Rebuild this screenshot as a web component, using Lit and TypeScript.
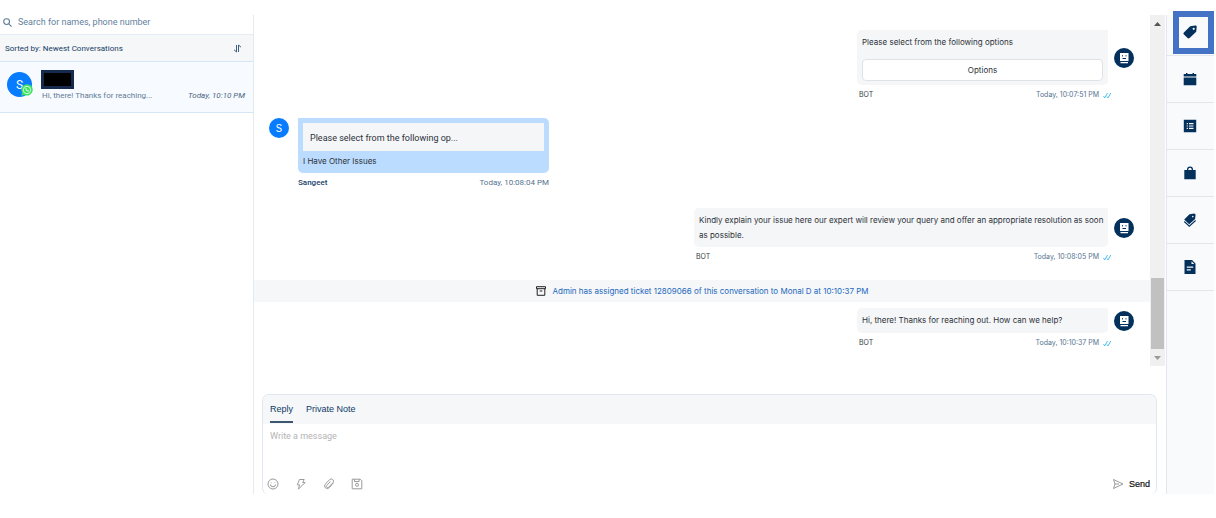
import { LitElement, html, css, svg, TemplateResult } from "lit";
import { customElement, property, state } from "lit/decorators.js";
import { classMap } from "lit/directives/class-map.js";

const icon = (box: string, body: TemplateResult, cls = "icon") =>
  html`<svg class=${cls} viewBox=${box} aria-hidden="true">${body}</svg>`;

const railIcons: { label: string; art: TemplateResult }[] = [
  {
    label: "Tags",
    art: svg`<path fill-rule="evenodd" d="M7.200 1.300 12.400.6c.8-.1 1.400.5 1.300 1.300L13.200 6.800 6.600 13c-.6.6-1.400.6-2 0L.9 9.400c-.6-.6-.6-1.400 0-2zM10.700 2.700a1.100 1.100 0 1 0 0 2.200 1.100 1.100 0 0 0 0-2.200z"/>`,
  },
  {
    label: "Calendar",
    art: svg`<path d="M.7 2h2.300V1h1.500v1h5V1H11v1h2.300v2.600H.7zM.7 5.600h12.600V13.200H.7z"/>`,
  },
  {
    label: "Details",
    art: svg`<path fill-rule="evenodd" d="M.8.8h12.400v12.400H.8zM3.700 4v1.200h1.200V4zm2.300 0v1.200h4.500V4zM3.700 6.400v1.200h1.200V6.400zm2.300 0v1.200h4.500V6.400zM3.700 8.800V10h1.200V8.800zm2.300 0V10h4.500V8.800z"/>`,
  },
  {
    label: "Orders",
    art: svg`<path fill-rule="evenodd" d="M1.300 4H4V3.500a3 3 0 0 1 6 0V4h2.700v9.200H1.300zM5.300 4h3.400v-.5a1.700 1.700 0 0 0-3.400 0z"/>`,
  },
  {
    label: "Tickets",
    art: svg`<path fill-rule="evenodd" d="M6.500 1.300 11.400.4l1.200 1-.5 4.600-5.900 5.200L1.200 6.500zM9.800 2.800a.8.8 0 1 0 0 1.600.8.8 0 0 0 0-1.600z"/><path d="M1.300 8.500l5 4.700 6.300-5.700" fill="none" stroke="currentColor" stroke-width="1.100"/>`,
  },
  {
    label: "Notes",
    art: svg`<path fill-rule="evenodd" d="M1.500 0H9l3.500 3.500V14h-11zM8.500 1.200V4h2.800zM3.800 6.600v1.200h6.400V6.600zm0 2.600v1.200h4V9.200z"/>`,
  },
];

const tools: { label: string; art: TemplateResult }[] = [
  {
    label: "Insert emoji",
    art: svg`<circle cx="6" cy="6" r="5"/><path d="M3.500 6.500a2.500 2.300 0 0 0 5 0M4.200 4v.6M7.800 4v.6"/>`,
  },
  {
    label: "Quick replies",
    art: svg`<path d="M4.500 1.500h4.700L7.700 4.500h2.500L3.500 11l1-4.200H2.300z"/>`,
  },
  {
    label: "Attach a file",
    art: svg`<path d="M10.300 5 6.200 9.700a2.600 2.600 0 0 1-3.900-3.500L6.500 1.700a2.300 2.300 0 0 1 3.400 3.100L5.700 9.200a1.300 1.300 0 0 1-2-1.700L7.500 3.500"/>`,
  },
  {
    label: "Save draft",
    art: svg`<path d="M1.200 1.200h8l1.600 1.600v8H1.200zM3.500 1.200v2.300h4.600V1.200"/><circle cx="6" cy="6.800" r="1.500"/>`,
  },
];

@customElement("bot-avatar")
class BotAvatar extends LitElement {
  static styles = css`
    :host { display: block; width: 20px; height: 20px; flex: none; }
    .face { display: block; width: 20px; height: 20px; }
  `;
  render() {
    return html`<svg class="face" viewBox="0 0 20 20" role="img" aria-label="Bot">
      <circle cx="10" cy="10" r="10" fill="#04315c" />
      <path d="M6 5h8.500v8H6zM6.500 14h7.500v1.200H6.500z" fill="#fff" />
      <path d="M8.500 7.200v1.200M12 7.200v1.200M8.500 10.500h3.500" stroke="#04315c" fill="none" />
    </svg>`;
  }
}

@customElement("bot-message")
class BotMessage extends LitElement {
  @property() text = "";
  @property() time = "";
  @property() option = "";
  @property({ type: Boolean, reflect: true }) wide = false;

  static styles = css`
    :host { display: block; align-self: flex-end; }
    .row { display: flex; align-items: center; gap: 6px; }
    .body { width: 251px; }
    :host([wide]) .body { width: 414px; padding-right: 2px; }
    .bubble {
      box-sizing: border-box;
      min-height: 25px;
      padding: 5px 5px 4px;
      background: #f5f6f8;
      border-radius: 5px 0 5px 5px;
      color: #2c3238;
    }
    .text { margin: 0; line-height: 15px; }
    .option {
      display: block;
      width: 100%;
      height: 22px;
      margin-top: 9px;
      padding: 0;
      border: 1px solid #dfe3e8;
      border-radius: 4px;
      background: #fff;
      color: #2c3238;
      font: inherit;
    }
    .meta {
      display: flex;
      align-items: center;
      justify-content: space-between;
      margin-top: 3px;
      padding: 0 22px 0 2px;
      font-size: 7px;
      line-height: 14px;
      color: #333a41;
    }
    .stamp { display: flex; align-items: center; gap: 4px; color: #54738f; }
    .ticks { width: 9px; height: 7px; fill: none; stroke: #4fc0ee; }
  `;
  render() {
    return html`
      <div class="row">
        <div class="body bubble">
          <p class="text">${this.text}</p>
          ${this.option ? html`<button class="option">${this.option}</button>` : ""}
        </div>
        <bot-avatar></bot-avatar>
      </div>
      <div class="meta">
        <span>BOT</span>
        <span class="stamp"
          >${this.time}
          <svg class="ticks" viewBox="0 0 9 7" aria-label="Read" role="img">
            <path d="M.5 4l1.200 2L4.500 1M4 4.500l1 1.500L7.800 1" />
          </svg>
        </span>
      </div>
    `;
  }
}

@customElement("app-root")
class AppRoot extends LitElement {
  @state() private tab = "Reply";

  static styles = css`
    :host {
      display: grid;
      grid-template-columns: 254px minmax(0, 1fr) 48px;
      box-sizing: border-box;
      height: 100vh;
      padding: 15px 2px 24px 0;
      background: #fff;
      font-family: Inter, "Liberation Sans", sans-serif;
      font-size: 8px;
      color: #2c3238;
    }
    button { font: inherit; color: inherit; background: none; border: 0; padding: 0; }

    .list { border-right: 1px solid #e4eaf1; font-family: Roboto, sans-serif; }
    .search {
      display: flex;
      align-items: center;
      gap: 6px;
      height: 19px;
      padding: 0 3px;
      border-bottom: 1px solid #e4edf6;
    }
    .search-icon { width: 9px; height: 9px; flex: none; fill: none; stroke: #5e7c99; stroke-width: 1.1; margin-bottom: 4px; }
    .search-box {
      flex: 1;
      min-width: 0;
      height: 14px;
      margin-bottom: 5px;
      padding: 0;
      border: 0;
      outline: 0;
      background: none;
      font: 9px Roboto, sans-serif;
      color: #2e5378;
    }
    .search-box::placeholder { color: #5f7f9d; opacity: 1; }
    .sort {
      display: flex;
      align-items: center;
      justify-content: space-between;
      height: 26px;
      padding: 0 11px 0 5px;
      background: #f5f7f9;
      border-bottom: 1px solid #d5e6f8;
      color: #153d63;
    }
    .sort-button { display: flex; }
    .sort-icon { width: 9px; height: 9px; fill: none; stroke: #3f617f; }
    .chat-item {
      display: flex;
      align-items: flex-start;
      height: 42px;
      padding: 8px 8px 0 7px;
      background: #f7faff;
      border-bottom: 1px solid #d5e6f8;
    }
    .who { position: relative; width: 34px; flex: none; padding-top: 2px; }
    .initial {
      display: grid;
      place-items: center;
      width: 25px;
      height: 25px;
      border-radius: 50%;
      background: #087cff;
      color: #fff;
      font-size: 12px;
    }
    .badge { position: absolute; left: 14px; top: 14px; width: 12px; height: 12px; }
    .summary { flex: 1; min-width: 0; }
    .redacted {
      box-sizing: border-box;
      width: 33px;
      height: 19px;
      background: #000;
      border: 3px solid #152a4e;
    }
    .preview { display: flex; justify-content: space-between; padding-left: 1px; line-height: 13px; color: #5f7a96; }
    .when { font-style: italic; color: #4a6580; }

    .main { display: flex; flex-direction: column; min-width: 0; overflow: hidden; }
    .thread { display: flex; flex: 1; min-height: 0; }
    .messages {
      display: flex;
      flex-direction: column;
      gap: 16px;
      flex: 1;
      min-width: 0;
      padding-top: 15px;
      overflow: hidden;
    }
    .messages bot-message { margin-right: 16px; }
    .customer { display: flex; gap: 9px; padding: 0 0 2px 15px; }
    .customer-avatar {
      display: grid;
      place-items: center;
      width: 20px;
      height: 20px;
      border-radius: 50%;
      background: #087cff;
      color: #fff;
      font-size: 10px;
    }
    .customer-body { width: 251px; }
    .customer-bubble {
      padding: 5px 5px 2px;
      background: #bbdcfe;
      border-radius: 0 5px 5px 5px;
      line-height: 20px;
    }
    .quote {
      height: 28px;
      padding: 0 7px;
      background: #f5f6f8;
      font-family: Roboto, sans-serif;
      font-size: 9px;
      line-height: 30px;
    }
    .customer-meta {
      display: flex;
      justify-content: space-between;
      margin-top: 3px;
      font-family: Roboto, sans-serif;
      line-height: 14px;
      color: #54738f;
    }
    .name { color: #173f68; font-weight: 500; }
    .event {
      display: flex;
      align-items: center;
      justify-content: center;
      gap: 7px;
      height: 22px;
      margin-bottom: -10px;
      background: #f5f7f9;
      color: #1e68bd;
    }
    .event-icon { width: 10px; height: 10px; fill: none; stroke: #222; }
    .scrollbar { display: flex; flex-direction: column; align-items: center; width: 15px; margin-right: 1px; background: #f0f0f0; }
    .arrow { display: grid; place-items: center; width: 15px; height: 17px; }
    .arrow-icon { width: 7px; height: 4px; fill: #555; }
    .arrow-icon.down { fill: #999; }
    .track { flex: 1; display: flex; align-items: flex-end; width: 13px; }
    .thumb { width: 13px; height: 71px; background: #c1c1c1; }

    .composer {
      margin: 28px 9px 0 8px;
      border: 1px solid #e1e7ee;
      border-bottom: 0;
      border-radius: 7px 7px 6px 6px;
      overflow: hidden;
    }
    .tabs {
      display: flex;
      gap: 13px;
      height: 29px;
      padding: 0 7px;
      background: #f5f7f9;
      font: 9px/28px "Liberation Sans", sans-serif;
      color: #0f3a66;
    }
    .tab { height: 28px; border-bottom: 2px solid transparent; }
    .tab.active { border-color: #3d5670; }
    .message-box {
      display: block;
      box-sizing: border-box;
      width: 100%;
      height: 50px;
      padding: 5px 7px;
      border: 0;
      outline: 0;
      resize: none;
      font: 9px/14px Roboto, sans-serif;
    }
    .message-box::placeholder { color: #b4b4b4; opacity: 1; }
    .actions { display: flex; align-items: center; gap: 16px; height: 20px; padding: 0 6px 0 4px; }
    .tool { display: flex; }
    .tool-icon { width: 12px; height: 12px; fill: none; stroke: #9a9a9a; }
    .send {
      display: flex;
      align-items: center;
      gap: 5px;
      margin-left: auto;
      font: 9px "Liberation Sans", sans-serif;
      color: #111;
      -webkit-text-stroke: 0.2px #111;
    }

    .rail { border-left: 1px solid #e1e6ec; background: #f8fafc; }
    .rail-item {
      position: relative;
      display: grid;
      place-items: center;
      box-sizing: border-box;
      width: 100%;
      height: 47px;
      padding-right: 1px;
      border-bottom: 1px solid #e3e7ec;
      color: #04315c;
    }
    .rail-item.first { height: 41px; padding-bottom: 6px; }
    .rail-item.first::after {
      content: "";
      position: absolute;
      inset: -4px 0 1px 6px;
      border: 6px solid #4472c4;
    }
    .rail-icon { width: 14px; height: 14px; fill: currentColor; }
  `;

  render() {
    return html`
      <aside class="list">
        <div class="search">
          ${icon("0 0 9 9", svg`<circle cx="3.600" cy="3.600" r="2.900"/><path d="M5.800 5.800l2.800 2.800"/>`, "search-icon")}
          <input class="search-box" type="text" aria-label="Search conversations" placeholder="Search for names, phone number" />
        </div>
        <div class="sort">
          <span>Sorted by: Newest Conversations</span>
          <button class="sort-button" aria-label="Change sort order">
            ${icon("0 0 9 9", svg`<path d="M3.500 1v7L1 5.800M5.500 8V1L8 3.200"/>`, "sort-icon")}
          </button>
        </div>
        <div class="chat-item">
          <div class="who">
            <span class="initial">S</span>
            ${icon("0 0 12 12", svg`<path d="M.3 11.700 1 8.500a5.700 5.700 0 1 1 2.400 2.400z" fill="#3fe063"/><circle cx="6" cy="6" r="3.700" fill="none" stroke="#d9ffe0" stroke-width=".9"/><path d="M4.600 4.200c-.4 1.600 1.400 3.700 3.200 3.300l.1-.8-1-.5-.5.400-1-1.100.3-.5-.5-.9z" fill="#fff"/>`, "badge")}
          </div>
          <div class="summary">
            <div class="redacted"></div>
            <div class="preview">
              <span>Hi, there! Thanks for reaching...</span>
              <span class="when">Today, 10:10 PM</span>
            </div>
          </div>
        </div>
      </aside>

      <main class="main">
        <div class="thread">
          <div class="messages">
            <bot-message text="Please select from the following options" option="Options" time="Today, 10:07:51 PM"></bot-message>
            <div class="customer">
              <span class="customer-avatar">S</span>
              <div class="customer-body">
                <div class="customer-bubble">
                  <div class="quote">Please select from the following op...</div>
                  I Have Other Issues
                </div>
                <div class="customer-meta">
                  <span class="name">Sangeet</span><span>Today, 10:08:04 PM</span>
                </div>
              </div>
            </div>
            <bot-message
              wide
              text="Kindly explain your issue here our expert will review your query and offer an appropriate resolution as soon as possible."
              time="Today, 10:08:05 PM"
            ></bot-message>
            <div class="event">
              ${icon("0 0 10 10", svg`<path d="M.5.700h9v2h-9zM1.200 2.700v6.600h7.600V2.700M3.700 5h2.600"/>`, "event-icon")}
              <span>Admin has assigned ticket 12809066 of this conversation to Monal D at 10:10:37 PM</span>
            </div>
            <bot-message text="Hi, there! Thanks for reaching out. How can we help?" time="Today, 10:10:37 PM"></bot-message>
          </div>
          <div class="scrollbar">
            <span class="arrow">${icon("0 0 7 4", svg`<path d="M0 4 3.500 0 7 4z"/>`, "arrow-icon")}</span>
            <div class="track"><div class="thumb"></div></div>
            <span class="arrow">${icon("0 0 7 4", svg`<path d="M0 0 3.500 4 7 0z"/>`, "arrow-icon down")}</span>
          </div>
        </div>

        <section class="composer">
          <div class="tabs">
            ${["Reply", "Private Note"].map(
              (name) => html`<button
                class=${classMap({ tab: true, active: this.tab === name })}
                @click=${() => (this.tab = name)}
              >${name}</button>`
            )}
          </div>
          <textarea class="message-box" aria-label="Message" placeholder="Write a message"></textarea>
          <div class="actions">
            ${tools.map(
              (t) => html`<button class="tool" aria-label=${t.label}>${icon("0 0 12 12", t.art, "tool-icon")}</button>`
            )}
            <button class="send">
              ${icon("0 0 12 12", svg`<path d="M1.500 1.500 11 6l-9.500 4.500L3 6zM3 6h4"/>`, "tool-icon")} Send
            </button>
          </div>
        </section>
      </main>

      <nav class="rail" aria-label="Conversation panels">
        ${railIcons.map(
          (r, i) => html`<button class=${classMap({ "rail-item": true, first: i === 0 })} aria-label=${r.label}>
            ${icon("0 0 14 14", r.art, "rail-icon")}
          </button>`
        )}
      </nav>
    `;
  }
}
